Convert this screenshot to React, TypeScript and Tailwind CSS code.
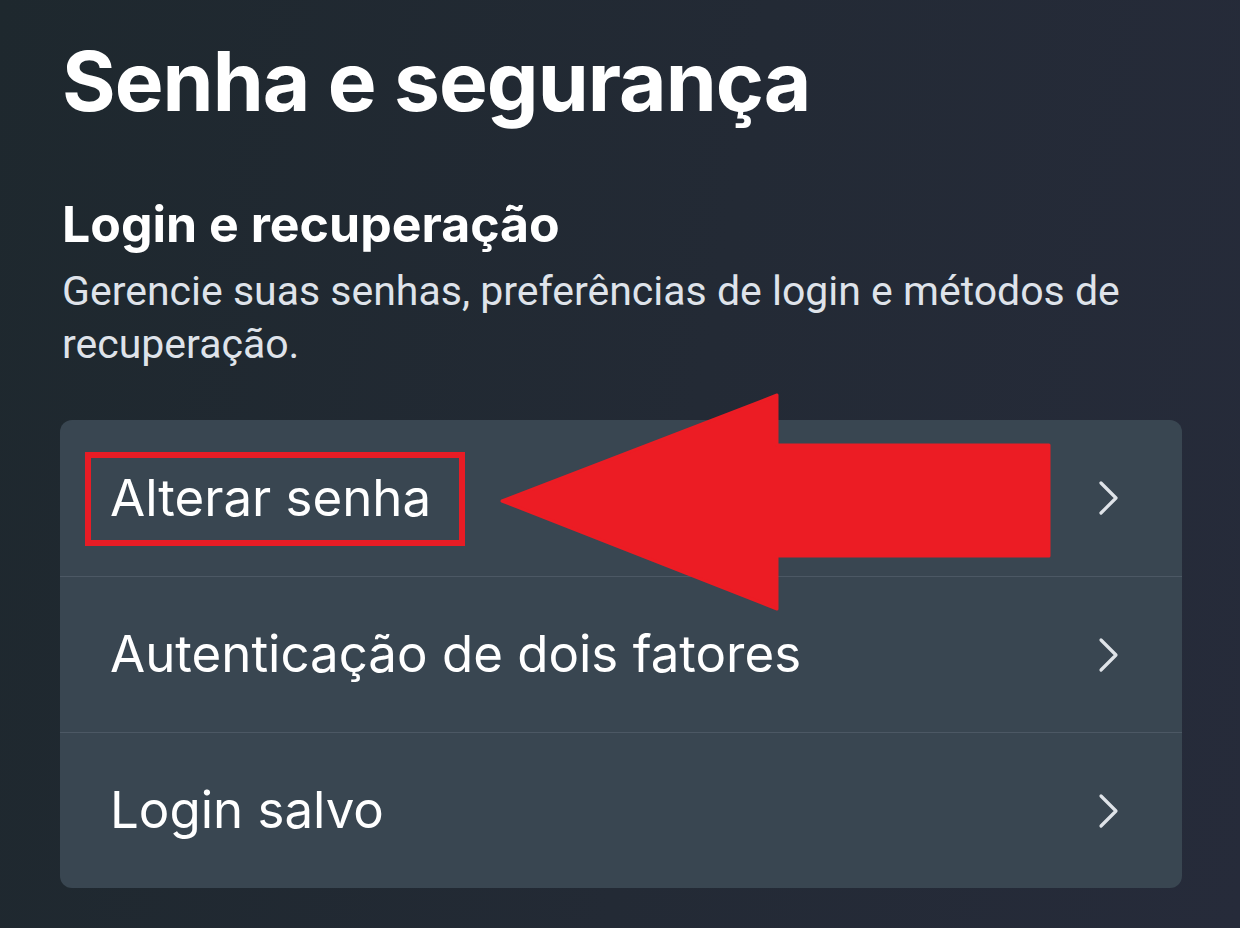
import React from "react";

const rows = ["Alterar senha", "Autenticação de dois fatores", "Login salvo"];

function Chevron() {
  return (
    <svg width="26" height="36" viewBox="0 0 26 36" fill="none" className="shrink-0">
      <polyline
        points="5,3 20,18 5,33"
        stroke="#dfe3e8"
        strokeWidth="3.2"
        strokeLinecap="round"
        strokeLinejoin="round"
      />
    </svg>
  );
}

export default function App() {
  return (
    <div
      className="w-[1240px] h-[928px] overflow-hidden bg-[linear-gradient(100deg,#1e282e_0%,#232a35_55%,#262b3a_100%)] text-white"
      style={{ fontFamily: "Inter, 'Noto Sans', sans-serif" }}
    >
      <div className="flex flex-col pl-[62px] pr-[58px]">
        <h1 className="mt-[41px] text-[82px] leading-none font-bold tracking-[-0.012em]">
          Senha e segurança
        </h1>
        <h2 className="mt-[76px] text-[50px] leading-none font-bold">
          Login e recuperação
        </h2>
        <p
          className="mt-[16px] text-[41px] leading-[53px] text-[#dfe3ea]"
          style={{ fontFamily: "Roboto, 'Noto Sans', sans-serif" }}
        >
          Gerencie suas senhas, preferências de login e métodos de recuperação.
        </p>
        <div className="relative mt-[49px] -ml-[2px] w-[1122px] rounded-[12px] bg-[#394651]">
          {rows.map((r, i) => (
            <div
              key={r}
              className={
                "flex h-[156px] items-center justify-between pl-[50px] pr-[60px] " +
                (i > 0 ? "border-t border-[#4c5864]" : "")
              }
            >
              <span className="text-[51px] font-normal text-white">{r}</span>
              <Chevron />
            </div>
          ))}
          <div className="absolute left-[25px] top-[32px] h-[94px] w-[380px] border-[6px] border-[#e81c25]" />
          <svg
            className="absolute left-[440px] top-[-28px]"
            width="552"
            height="220"
            viewBox="0 0 552 220"
          >
            <path
              d="M2,109 L277,3 L277,53 L549,53 L549,164 L277,164 L277,217 Z"
              fill="#ec1c24"
              stroke="#ec1c24"
              strokeWidth="3"
              strokeLinejoin="round"
            />
          </svg>
        </div>
      </div>
    </div>
  );
}
